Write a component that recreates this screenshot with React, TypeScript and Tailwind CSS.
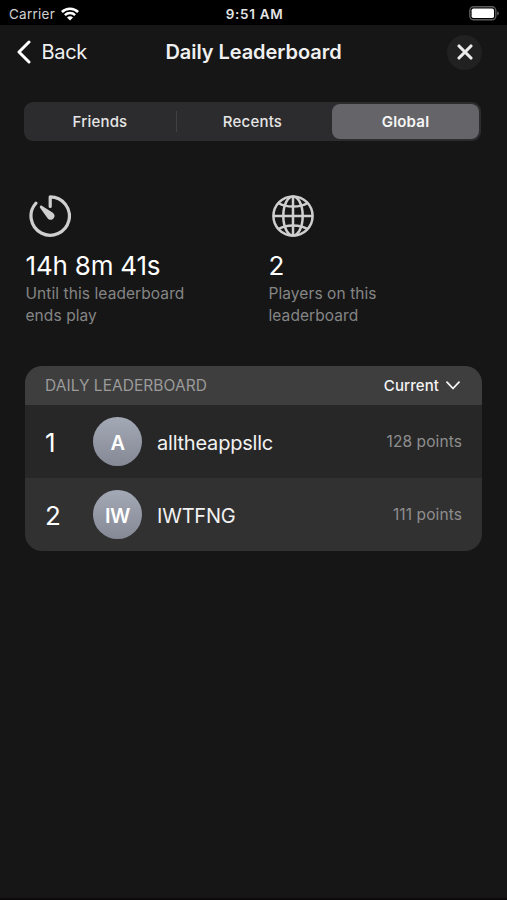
const STATS = [
  { icon: <TimerIcon />, value: '14h 8m 41s', lines: ['Until this leaderboard', 'ends play'] },
  { icon: <GlobeIcon />, value: '2', lines: ['Players on this', 'leaderboard'] },
];

const PLAYERS = [
  { rank: 1, initials: 'A', name: 'alltheappsllc', points: '128 points', row: 'bg-[#272727]' },
  { rank: 2, initials: 'IW', name: 'IWTFNG', points: '111 points', row: 'bg-[#313131]' },
];

function WifiIcon() {
  return (
    <svg viewBox="0 0 18 14" className="w-[18px] h-[14px]" fill="none" stroke="#fff" strokeWidth="2.5">
      <path d="M0.9 5A11.5 11.5 0 0 1 17.1 5" />
      <path d="M3.9 8.2A7.2 7.2 0 0 1 14.1 8.2" />
      <path d="M6 10.5A4.2 4.2 0 0 1 12 10.5L9 13.5Z" fill="#fff" stroke="none" />
    </svg>
  );
}

function BatteryIcon() {
  return (
    <svg viewBox="0 0 31 15" className="w-[31px] h-[15px]" fill="none">
      <rect x="0.8" y="0.8" width="26" height="13" rx="3.8" stroke="#5c5c5c" strokeWidth="1.4" />
      <rect x="2.6" y="2.5" width="22.4" height="9.6" rx="1.8" fill="#fff" />
      <path d="M28.2 5.2C30.6 6 30.6 8.6 28.2 9.4Z" fill="#5c5c5c" />
    </svg>
  );
}

function TimerIcon() {
  return (
    <svg viewBox="0 0 42 42" className="w-[42px] h-[42px]" fill="none" stroke="#cfcfcf" strokeWidth="3.2" strokeLinecap="round" strokeLinejoin="round">
      <path d="M21.2 11.4V1.8A19.2 19.2 0 1 1 6.9 8.2" />
      <path d="M11.2 11C10.6 11.6 10.7 12.3 11.2 13L18.6 23.2C21.8 27.6 28.3 22.2 24.3 18.3C23.9 17.9 23.5 17.6 23.1 17.3L13.2 10.9C12.4 10.4 11.8 10.4 11.2 11Z" fill="#cfcfcf" stroke="none" />
    </svg>
  );
}

function GlobeIcon() {
  return (
    <svg viewBox="0 0 42 42" className="w-[42px] h-[42px]" fill="none" stroke="#cfcfcf" strokeWidth="2.5">
      <circle cx="21" cy="21" r="19.6" />
      <ellipse cx="21" cy="21" rx="9.7" ry="19.6" />
      <path d="M21 1.4V40.6M1.4 21H40.6" />
      <path d="M6.6 8C13.5 12.8 28.5 12.8 35.4 8M6.6 34C13.5 29.2 28.5 29.2 35.4 34" />
    </svg>
  );
}

function StatusBar() {
  return (
    <div className="h-[25px] bg-black grid grid-cols-[1fr_auto_1fr] items-center pl-[9px] pr-[7px] pt-[2px]">
      <div className="flex items-center gap-[6px]">
        <span className="pt-px text-[13.5px] tracking-[0.25px] text-[#d0d0d0]">Carrier</span>
        <WifiIcon />
      </div>
      <span className="pt-px text-[13.5px] font-semibold tracking-[0.7px] text-[#e4e4e4]">9:51 AM</span>
      <div className="flex justify-end">
        <BatteryIcon />
      </div>
    </div>
  );
}

function NavBar() {
  return (
    <div className="h-[55px] pb-px grid grid-cols-[1fr_auto_1fr] items-center px-[25px]">
      <button className="ml-[-9px] flex items-center gap-[9.5px] text-white">
        <svg viewBox="0 0 16 24" className="w-[16px] h-[24px]" fill="none" stroke="currentColor" strokeWidth="3" strokeLinecap="round" strokeLinejoin="round">
          <path d="M13 2L3 12L13 22" />
        </svg>
        <span className="text-[20px] tracking-[-0.3px] text-[#f0f0f0]">Back</span>
      </button>
      <h1 className="text-[20px] font-semibold tracking-[-0.05px] text-[#f0f0f0]">Daily Leaderboard</h1>
      <div className="flex justify-end">
        <button aria-label="Close" className="w-[35px] h-[35px] rounded-full bg-[#212121] flex items-center justify-center">
          <svg viewBox="0 0 16 16" className="w-[16px] h-[16px]" stroke="#ececec" strokeWidth="3.1" strokeLinecap="round">
            <path d="M2 2L14 14M14 2L2 14" />
          </svg>
        </button>
      </div>
    </div>
  );
}

function Segments() {
  return (
    <div className="mt-[22px] ml-[24px] mr-[26px] h-[39px] rounded-[9px] bg-[#2c2c2e] grid grid-cols-[152px_1px_151px_147px] items-center text-[15px] font-medium tracking-[0.2px] text-[#e6e6e6] text-center">
      <span className="pt-0.5">Friends</span>
      <span className="h-[21px] bg-[#414143]" />
      <span className="pt-0.5">Recents</span>
      <span className="ml-[4px] mr-[-4px] h-[35px] pt-0.5 rounded-[8px] bg-[#656569] text-[#f6f6f6] font-semibold flex items-center justify-center">Global</span>
    </div>
  );
}

function Stats() {
  return (
    <div className="mt-[54px] ml-[25.5px] grid grid-cols-[243px_1fr]">
      {STATS.map(stat => (
        <div key={stat.value}>
          <div className="ml-[3.5px]">{stat.icon}</div>
          <p className="mt-[12px] text-[26px] leading-[33px] tracking-[-0.2px] text-white">{stat.value}</p>
          <p className="pt-px text-[15.5px] leading-[22px] tracking-[0.08px] text-[#858585]">
            {stat.lines[0]}
            <br />
            {stat.lines[1]}
          </p>
        </div>
      ))}
    </div>
  );
}

function Leaderboard() {
  return (
    <div className="mt-[39px] ml-[25px] mr-[25px] rounded-[17px] overflow-hidden">
      <div className="h-[39px] bg-[#3e3e3e] flex items-center justify-between pl-[20px] pr-[22px]">
        <span className="pt-px text-[15.5px] tracking-[0.04px] text-[#9b9b9b]">DAILY LEADERBOARD</span>
        <button className="flex items-center gap-[7px] text-[15px] font-medium text-[#f4f4f4]">
          <span className="pt-0.5 tracking-[0.1px]">Current</span>
          <svg viewBox="0 0 14 9" className="w-[14px] h-[9px]" fill="none" stroke="currentColor" strokeWidth="1.8" strokeLinecap="round" strokeLinejoin="round">
            <path d="M1 1.2L7 7.5L13 1.2" />
          </svg>
        </button>
      </div>
      {PLAYERS.map(player => (
        <div key={player.rank} className={`h-[73px] flex items-center pl-[20px] pr-[20px] ${player.row}`}>
          <span className="w-[48px] pt-px text-[26px] text-white">{player.rank}</span>
          <span className="w-[49px] h-[49px] pt-0.5 rounded-full bg-linear-to-b from-[#a4a9b6] to-[#858995] flex items-center justify-center text-[20px] font-semibold tracking-[-0.5px] text-white">
            {player.initials}
          </span>
          <span className="ml-[15px] flex-1 pt-0.5 text-[20px] tracking-[-0.22px] text-[#f2f2f2]">{player.name}</span>
          <span className="pt-px text-[15.5px] tracking-[0.1px] text-[#8e8e8e]">{player.points}</span>
        </div>
      ))}
    </div>
  );
}

export default function App() {
  return (
    <div className="w-[507px] h-[900px] overflow-hidden bg-[#161616] border-b-2 border-[#0d0a0b] font-['Inter','Liberation_Sans',sans-serif]">
      <StatusBar />
      <NavBar />
      <Segments />
      <Stats />
      <Leaderboard />
    </div>
  );
}
